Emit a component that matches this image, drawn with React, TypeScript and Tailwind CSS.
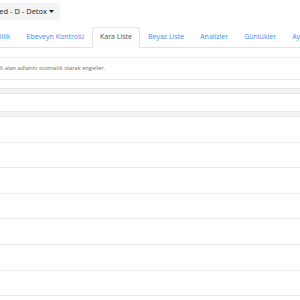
const tabs = [
  "Kurulum",
  "Güvenlik",
  "Gizlilik",
  "Ebeveyn Kontrolü",
  "Kara Liste",
  "Beyaz Liste",
  "Analizler",
  "Günlükler",
  "Ayarlar",
];

const rows = [26, 25, 26, 25, 26, 26, 25, 26];

export default function App() {
  return (
    <div
      className="h-[300px] w-[300px] overflow-hidden bg-white"
      style={{ fontFamily: '"Open Sans", "Liberation Sans", sans-serif' }}
    >
      <div className="ml-[-106px] w-[520px]">
        {/* profile dropdown */}
        <div className="flex h-[27px] w-[166px] items-start justify-end pt-[3px]">
          <button className="flex h-[17px] items-center gap-[2px] whitespace-nowrap rounded-[3px] bg-[#f3f4f6] pl-[8px] pr-[6px] text-[7.5px] text-[#222]">
            <span>Modified - D - Detox</span>
            <svg width="5" height="3" viewBox="0 0 5 3">
              <path d="M0 0h5L2.5 3z" fill="#222" />
            </svg>
          </button>
        </div>

        {/* tabs */}
        <div className="ml-[-1px] flex h-[21px] items-end border-b border-[#e3e3e3]">
          {tabs.map((t) => (
            <div
              key={t}
              className={
                t === "Kara Liste"
                  ? "mb-[-1px] flex h-[21px] items-center whitespace-nowrap rounded-t-[3px] border border-b-white border-[#e3e3e3] bg-white px-[7px] text-[7px] text-[#495057]"
                  : "flex h-[20px] items-center whitespace-nowrap border border-transparent px-[7px] text-[7px] text-[#3d8ef0]"
              }
            >
              {t}
            </div>
          ))}
        </div>

        {/* card */}
        <div className="mt-[9px] border-t border-[#ececec]">
          <div className="flex h-[21px] w-[211px] items-center justify-end text-[5.7px] text-[#6f6f6f]">
            <span className="whitespace-nowrap">
              Bir alan adını engellemek, tüm alt alan adlarını otomatik olarak engeller.
            </span>
          </div>
          <div className="h-[9px] border-t border-[#ececec]" />
          <div className="h-[6px] border-y border-[#e8e8e8] bg-[#f4f4f4]" />
          <div className="h-[17px]" />
          <div className="h-[6px] border-y border-[#e8e8e8] bg-[#f4f4f4]" />
          {rows.map((h, i) => (
            <div
              key={i}
              className="border-b border-[#ececec]"
              style={{ height: h }}
            />
          ))}
        </div>
      </div>
    </div>
  );
}
